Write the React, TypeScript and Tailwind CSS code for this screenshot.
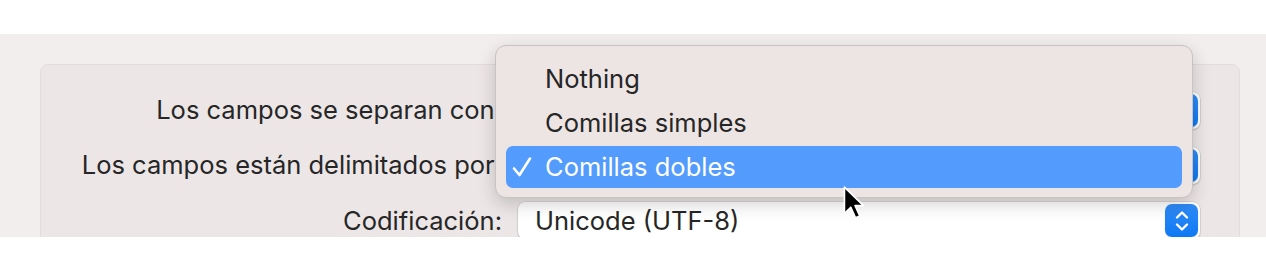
import React from "react";

const font = { fontFamily: "Inter, 'Noto Sans', sans-serif" };

const Stepper = () => (
  <div className="flex h-[33px] w-[33px] items-center justify-center rounded-[7px] bg-gradient-to-b from-[#2f8cf7] to-[#0a78f4] shadow-[0_1px_1px_rgba(0,0,0,0.2)]">
    <svg width="16" height="26" viewBox="0 0 16 26" fill="none">
      <path d="M3 9.5 8 4.5l5 5" stroke="white" strokeWidth="2.4" strokeLinecap="round" strokeLinejoin="round" />
      <path d="M3 16.5 8 21.5l5-5" stroke="white" strokeWidth="2.4" strokeLinecap="round" strokeLinejoin="round" />
    </svg>
  </div>
);

const Popup = ({ value }: { value: string }) => (
  <div className="flex h-[37px] w-[682px] items-center justify-between rounded-[7px] bg-white pl-[17px] pr-[2px] shadow-[0_0_0_0.5px_rgba(0,0,0,0.12),0_1px_2px_rgba(0,0,0,0.18)]">
    <span className="text-[25.5px] text-[#262626]">{value}</span>
    <Stepper />
  </div>
);

const rows = [
  { label: "Los campos se separan con:", value: "Coma" },
  { label: "Los campos están delimitados por:", value: "Comillas dobles" },
  { label: "Codificación:", value: "Unicode (UTF-8)" },
];

const items = ["Nothing", "Comillas simples", "Comillas dobles"];

const Check = () => (
  <svg width="22" height="24" viewBox="0 0 22 24" fill="none">
    <path d="M3 13.5 8.5 20 19 3.5" stroke="white" strokeWidth="2.6" strokeLinecap="round" strokeLinejoin="round" />
  </svg>
);

const Cursor = () => (
  <svg width="26" height="36" viewBox="0 0 24 34" className="absolute left-[842px] top-[151px]">
    <path
      d="M2 2v25l6-6 4.5 10 4-1.8-4.4-9.8H20L2 2Z"
      fill="#000"
      stroke="#fff"
      strokeWidth="1.6"
      strokeLinejoin="round"
    />
  </svg>
);

export default function App() {
  return (
    <div className="h-[276px] w-[1266px] bg-white" style={font}>
      <div className="h-[34px]" />
      <div className="relative h-[203px] overflow-hidden bg-[#f3eeee] pl-[40px] pr-[26px] pt-[30px]">
        <div className="h-[200px] rounded-t-[8px] border border-[#e2dcdc] bg-[#ece6e6] pt-[26px]">
          <div className="flex flex-col gap-[17px]">
            {rows.map((r) => (
              <div key={r.label} className="flex items-center">
                <div className="w-[477px] whitespace-nowrap pr-[16px] text-right text-[25.5px] text-[#262626]">
                  {r.label}
                </div>
                <Popup value={r.value} />
              </div>
            ))}
          </div>
        </div>

        <div className="absolute left-[495px] top-[11px] w-[698px] rounded-[11px] border border-[#c9c3c3] bg-[#ede5e4] px-[10px] pb-[9px] pt-[11px] shadow-[0_6px_18px_rgba(0,0,0,0.18)]">
          {items.map((it, i) => {
            const sel = i === 2;
            return (
              <div
                key={it}
                className={`flex items-center rounded-[7px] text-[25.5px] ${
                  sel ? "mt-[1px] h-[42px] bg-[#539bfd] text-white" : "h-[44px] text-[#262626]"
                }`}
              >
                <span className="flex w-[39px] items-center pl-[5px]">{sel ? <Check /> : null}</span>
                <span>{it}</span>
              </div>
            );
          })}
        </div>
        <Cursor />
      </div>
    </div>
  );
}
